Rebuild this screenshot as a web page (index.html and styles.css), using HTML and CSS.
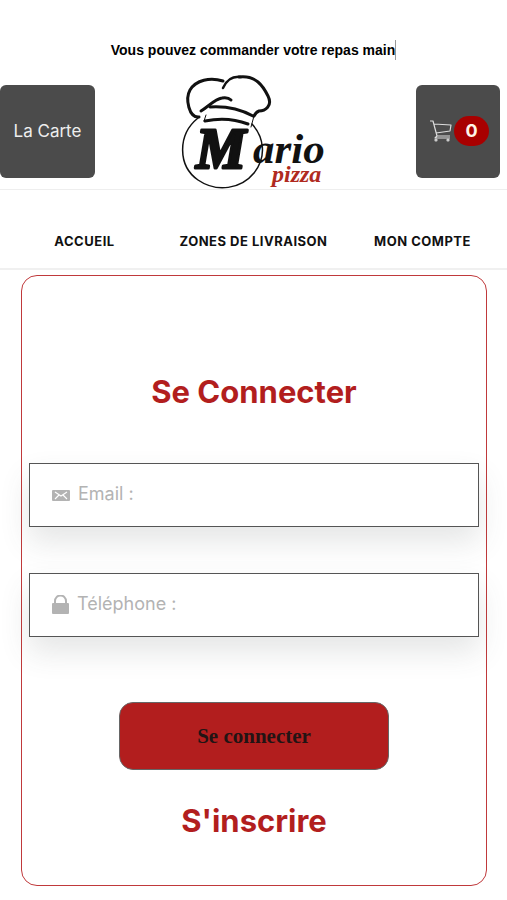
FILE: index.html
```html
<!DOCTYPE html>
<html lang="fr">
    <head>
        <meta charset="utf-8">
        <meta name="viewport" content="width=device-width, initial-scale=1">
        <title>Mario Pizza</title>
        <link rel="stylesheet" href="styles.css">
    </head>
    <body>
        <p class="tagline"><span class="typed">Vous pouvez commander votre repas main</span></p>
        <header class="top-bar">
            <a class="tile tile-menu" href="#">La Carte</a>
            <a class="logo" href="#">
                <svg width="150" height="118" viewBox="0 0 150 118" role="img" aria-label="Mario pizza">
                    <g fill="none" stroke="#111" stroke-linecap="round" stroke-linejoin="round">
                        <path stroke-width="1.5" d="M17 46C-4 63 -3 94 17 108C36 121 60 117 73 101C86 85 83 65 71 52"/>
                        <path stroke-width="3" d="M18 45C8 46 4 27 9 18C15 8 29 5 42 9"/>
                        <path stroke-width="2.5" d="M42 16C46 7 52 4 60 5"/>
                        <path stroke-width="3" d="M58 5C75 3 82 14 87 24C92 34 84 39 78 39Q75 40 73 44"/>
                        <path stroke-width="3" d="M20 39C28 34 34 27 41 26Q47 25 50 28"/>
                        <path stroke-width="3" d="M29 35C44 34 57 36 72 44"/>
                        <path stroke-width="3" d="M24 49C38 46 54 47 67 52"/>
                        <path stroke-width="1" d="M25 43L23 49M73 44L70 55"/>
                    </g>
                    <text class="logo-initial" x="15" y="96">M</text>
                    <text class="logo-name" x="72" y="91">ario</text>
                    <text class="logo-sub" x="91" y="110">pizza</text>
                </svg>
            </a>
            <a class="tile tile-cart" href="#" aria-label="Panier">
                <svg width="22" height="22" viewBox="0 0 22 22" fill="none" stroke="#ddd" stroke-width="1.2" stroke-linejoin="round">
                    <path d="M0 1h3l4 15h13M4 4l17 1-1 6-14 2M7 16l-2 2h15"/>
                    <circle cx="6" cy="20" r="1"/>
                    <circle cx="18" cy="20" r="1"/>
                </svg>
                <span class="count">0</span>
            </a>
        </header>
        <nav class="main-nav">
            <a href="#">ACCUEIL</a>
            <a href="#">ZONES DE LIVRAISON</a>
            <a href="#">MON COMPTE</a>
        </nav>
        <main class="card">
            <h1>Se Connecter</h1>
            <form action="#" method="POST">
                <label class="field">
                    <svg width="18" height="18" viewBox="0 0 18 18">
                        <rect x="0" y="4" width="18" height="11" rx="1" fill="#b3b3b3"/>
                        <path d="M3 6l6 4 6-4M3 13l4-4M15 13l-4-4" fill="none" stroke="#fff" stroke-width="1.1"/>
                    </svg>
                    <input type="email" name="email" placeholder="Email :" aria-label="Email">
                </label>
                <label class="field">
                    <svg width="17" height="20" viewBox="0 0 17 20">
                        <path d="M3 10V6a5 5 0 0 1 11 0v4" fill="none" stroke="#b3b3b3" stroke-width="2"/>
                        <rect x="0" y="8" width="17" height="11" rx="1" fill="#b3b3b3"/>
                    </svg>
                    <input type="tel" name="telephone" placeholder="Téléphone :" aria-label="Téléphone">
                </label>
                <button class="submit" type="submit">Se connecter</button>
            </form>
            <a class="register" href="#">S'inscrire</a>
        </main>
    </body>
</html>
```

FILE: styles.css
```css
*, *:after, *:before {
    box-sizing: border-box;
    margin: 0;
    padding: 0;
}
body {
    background: #fff;
    color: #111;
    font-family: Inter, "Liberation Sans", sans-serif;
}
a {
    color: inherit;
    text-decoration: none;
}
.tagline {
    padding-top: 40px;
    text-align: center;
    font: bold 14px/20px "Liberation Sans", Arial, sans-serif;
    color: #000;
}
.typed {
    display: inline-block;
    border-right: 1px solid #999;
}
.top-bar {
    display: grid;
    grid-template-columns: 95px 1fr 84px;
    align-items: center;
    height: 130px;
    padding: 12px 7px 0 0;
    border-bottom: 1px solid #eee;
}
.tile {
    display: flex;
    align-items: center;
    justify-content: center;
    height: 93px;
    border-radius: 6px;
    background: #4b4b4b;
    color: #eee;
    font-size: 17px;
}
.logo {
    justify-self: center;
    height: 118px;
}
.logo text {
    font-family: "Liberation Serif", serif;
    font-style: italic;
    font-weight: bold;
    fill: #111;
}
.logo .logo-initial {
    font-size: 56px;
    stroke: #111;
    stroke-width: 3px;
    stroke-linejoin: round;
}
.logo .logo-name {
    font-size: 43px;
}
.logo .logo-sub {
    font-size: 24px;
    fill: #b02a20;
}
.tile-cart {
    gap: 2px;
    padding-left: 3px;
}
.count {
    padding: 0 11px;
    border-radius: 15px;
    background: #a80000;
    color: #fff4e8;
    font-size: 18px;
    font-weight: 700;
    line-height: 30px;
}
.main-nav {
    display: grid;
    grid-template-columns: repeat(3, 1fr);
    padding: 41px 0 17px;
    border-bottom: 2px solid #f0f0f0;
    text-align: center;
    font-size: 13px;
    font-weight: 700;
    line-height: 20px;
    letter-spacing: 0.5px;
}
.card {
    margin: 5px 20px 14px 21px;
    padding: 92px 7px 40px;
    border: 1px solid #c0393b;
    border-radius: 16px;
    text-align: center;
}
h1, .register {
    color: #b21e1e;
    font-size: 31px;
    font-weight: 700;
    line-height: 48px;
}
form {
    padding-top: 47px;
}
.field {
    display: flex;
    align-items: center;
    gap: 8px;
    height: 64px;
    margin-bottom: 46px;
    padding-left: 22px;
    border: 1px solid #555;
    background: #fff;
    box-shadow: 0 15px 30px rgba(70, 80, 80, 0.14);
}
.field input {
    flex: 1;
    min-width: 0;
    height: 60px;
    padding-bottom: 4px;
    border: none;
    outline: none;
    background: transparent;
    color: #111;
    font-family: inherit;
    font-size: 18px;
}
.field input::placeholder {
    color: #b3b3b3;
}
.submit {
    display: block;
    width: 60%;
    height: 68px;
    margin: 65px auto 27px;
    border: 1px solid #666;
    border-radius: 14px;
    background: #b21e1e;
    color: #221414;
    font: bold 21px "Liberation Serif", "Times New Roman", serif;
    cursor: pointer;
}
.submit:hover {
    background: #9c1919;
}
```
